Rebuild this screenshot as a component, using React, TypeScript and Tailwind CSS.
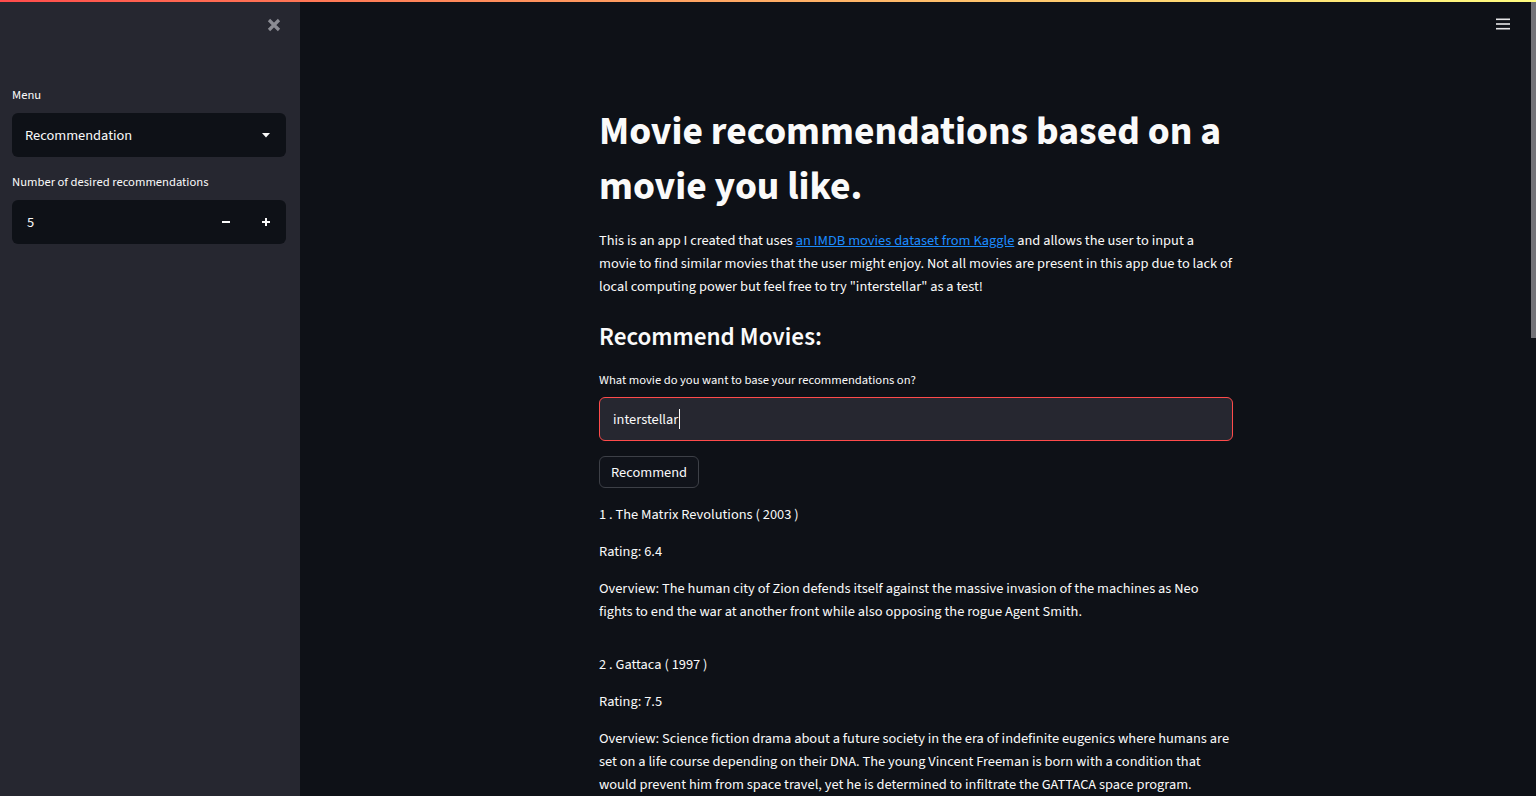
import React from "react";

function CloseIcon() {
  return (
    <svg width="14" height="14" viewBox="0 0 14 14" className="block">
      <path d="M2 2 L12 12 M12 2 L2 12" stroke="#8b8c93" strokeWidth="3.2" strokeLinecap="butt" />
    </svg>
  );
}

function Caret() {
  return (
    <svg width="8" height="5" viewBox="0 0 8 5" className="block">
      <path d="M0 0 H8 L4 4.5 Z" fill="#fafafa" />
    </svg>
  );
}

function Minus() {
  return (
    <svg width="8" height="8" viewBox="0 0 8 8" className="block">
      <rect x="0" y="3" width="8" height="2" fill="#fafafa" />
    </svg>
  );
}

function Plus() {
  return (
    <svg width="8" height="8" viewBox="0 0 8 8" className="block">
      <rect x="0" y="3" width="8" height="2" fill="#fafafa" />
      <rect x="3" y="0" width="2" height="8" fill="#fafafa" />
    </svg>
  );
}

function Hamburger() {
  return (
    <svg width="14" height="12" viewBox="0 0 14 12" className="block">
      <rect x="0" y="0.5" width="14" height="1.6" fill="#e6e6e8" />
      <rect x="0" y="5.2" width="14" height="1.6" fill="#e6e6e8" />
      <rect x="0" y="9.9" width="14" height="1.6" fill="#e6e6e8" />
    </svg>
  );
}

type Movie = { title: string; year: string; rating: string; overview: string };

const movies: Movie[] = [
  {
    title: "The Matrix Revolutions",
    year: "2003",
    rating: "6.4",
    overview:
      "The human city of Zion defends itself against the massive invasion of the machines as Neo fights to end the war at another front while also opposing the rogue Agent Smith.",
  },
  {
    title: "Gattaca",
    year: "1997",
    rating: "7.5",
    overview:
      "Science fiction drama about a future society in the era of indefinite eugenics where humans are set on a life course depending on their DNA. The young Vincent Freeman is born with a condition that would prevent him from space travel, yet he is determined to infiltrate the GATTACA space program.",
  },
];

export default function App() {
  return (
    <div className="relative flex h-[796px] w-full overflow-hidden bg-[#0e1117] font-['Source_Sans_3','Source_Sans_Pro',Lato,sans-serif] text-[#fafafa]">
      <div className="absolute inset-x-0 top-0 z-10 h-[2px] bg-gradient-to-r from-[#ff4b4b] to-[#fffd80]" />

      {/* Sidebar */}
      <aside className="flex w-[300px] shrink-0 flex-col bg-[#262730]">
        <div className="flex h-[48px] items-center justify-end pr-[19px] pt-[1px]">
          <CloseIcon />
        </div>
        <div className="flex flex-col pl-[12px] pr-[14px] pt-[37px]">
          <label className="mb-[8px] h-[20px] text-[12.6px] leading-[20px]">Menu</label>
          <div className="mb-[15px] flex h-[44px] items-center justify-between rounded-[6px] bg-[#0e1117] pl-[13px] pr-[16px]">
            <span className="text-[14.4px] leading-[23px]">Recommendation</span>
            <Caret />
          </div>
          <label className="mb-[8px] h-[20px] text-[12.6px] leading-[20px]">Number of desired recommendations</label>
          <div className="flex h-[44px] items-center rounded-[6px] bg-[#0e1117]">
            <span className="flex-1 pl-[15px] text-[14.4px] leading-[23px]">5</span>
            <div className="flex h-full w-[40px] items-center justify-center">
              <Minus />
            </div>
            <div className="flex h-full w-[40px] items-center justify-center">
              <Plus />
            </div>
          </div>
        </div>
      </aside>

      {/* Main */}
      <main className="relative flex-1 overflow-hidden">
        <div className="absolute inset-x-0 top-0 flex h-[48px] items-center justify-end pr-[26px]">
          <Hamburger />
        </div>
        <div className="absolute right-0 top-0 h-[338px] w-[5px] bg-[#737378]" />

        <div className="mx-auto w-[634px] -translate-x-[2px] pt-[104px]">
          <h1 className="mb-[14.4px] text-[39.6px] font-bold leading-[1.4]">
            Movie recommendations based on a movie you like.
          </h1>
          <p className="text-[14.4px] leading-[23px]">
            This is an app I created that uses{" "}
            <a className="text-[#1c8cff] underline" href="#">
              an IMDB movies dataset from Kaggle
            </a>{" "}
            and allows the user to input a movie to find similar movies that the user might enjoy. Not all movies are
            present in this app due to lack of local computing power but feel free to try "interstellar" as a test!
          </p>
          <h3 className="mt-[24px] text-[25.2px] font-semibold leading-[30px]">Recommend Movies:</h3>
          <label className="mt-[18px] block h-[20px] text-[12.6px] leading-[20px]">
            What movie do you want to base your recommendations on?
          </label>
          <div className="mt-[7px] flex h-[44px] items-center rounded-[6px] border border-[#ff4b4b] bg-[#262730] pl-[13px]">
            <span className="text-[14.4px] leading-[23px]">interstellar</span>
            <span className="ml-[0.5px] inline-block h-[20px] w-[1px] bg-[#fafafa]" />
          </div>
          <div className="mt-[15px] flex">
            <button className="flex h-[32px] items-center rounded-[6px] border border-[#3d4047] bg-[#10131a] px-[11px] text-[14.4px] leading-[23px] text-[#fafafa]">
              Recommend
            </button>
          </div>

          <div className="mt-[15px]">
            {movies.map((m, i) => (
              <div key={m.title} className={i > 0 ? "pt-[15.5px]" : ""}>
                <p className="mb-[14px] text-[14.4px] leading-[23px]">
                  {i + 1} . {m.title} ( {m.year} )
                </p>
                <p className="mb-[14px] text-[14.4px] leading-[23px]">Rating: {m.rating}</p>
                <p className="mb-[14px] text-[14.4px] leading-[23px]">Overview: {m.overview}</p>
              </div>
            ))}
          </div>
        </div>
      </main>
    </div>
  );
}
